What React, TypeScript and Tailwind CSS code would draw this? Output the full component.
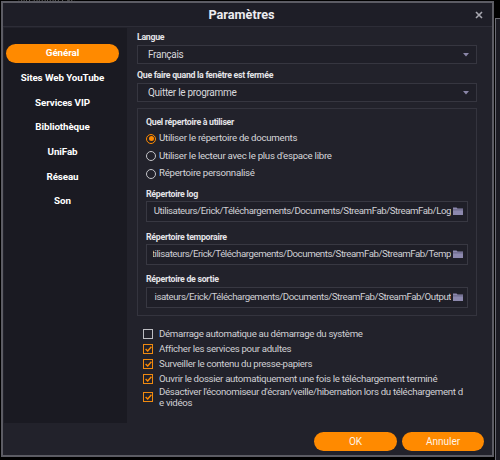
import React from "react";

const Folder = () => (
  <svg width="10" height="8" viewBox="0 0 10 8" className="shrink-0">
    <path d="M0 0.5 H3.5 L4.5 1.5 H10 V8 H0 Z" fill="#8c88ad" />
    <rect x="0" y="2.5" width="10" height="0.8" fill="#5e5a7c" />
  </svg>
);

const Arrow = () => (
  <svg width="6" height="4" viewBox="0 0 6 4">
    <path d="M0 0 H6 L3 3.5 Z" fill="#8a86a8" />
  </svg>
);

const Radio = ({ on, label }: { on?: boolean; label: string }) => (
  <div className="flex items-center h-[17.5px]">
    <div
      className={
        on
          ? "w-[10px] h-[10px] rounded-full border-[1.5px] border-[#ff8a00] flex items-center justify-center"
          : "w-[10px] h-[10px] rounded-full border-[1.5px] border-[#c4c4c8]"
      }
    >
      {on && <div className="w-[5px] h-[5px] rounded-full bg-[#ff8a00]" />}
    </div>
    <span className="ml-[3px] text-[9.7px] tracking-[-0.28px] text-[#d6d6da] whitespace-nowrap">{label}</span>
  </div>
);

const Check = ({ on }: { on?: boolean }) =>
  on ? (
    <div className="w-[10px] h-[10px] border-[1.5px] border-[#f08a10] flex items-center justify-center shrink-0">
      <svg width="7" height="6" viewBox="0 0 7 6">
        <path d="M0.6 3 L2.7 5 L6.4 0.8" stroke="#ff8a00" strokeWidth="1.4" fill="none" />
      </svg>
    </div>
  ) : (
    <div className="w-[10px] h-[10px] border-[1.5px] border-[#bdbdc2] shrink-0" />
  );

const Label = ({ children, cls }: { children: React.ReactNode; cls?: string }) => (
  <div className={"h-[12px] leading-[12px] text-[8.8px] font-bold tracking-[-0.3px] text-[#e4e4e8] whitespace-nowrap " + (cls || "")}>
    {children}
  </div>
);

const PathInput = ({ text, cls }: { text: string; cls: string }) => (
  <div className={"h-[21px] border border-[#383842] bg-[#1f1f28] flex items-center pl-[6px] pr-[4px] " + cls}>
    <div className="flex-1 overflow-hidden flex justify-end">
      <span className="text-[9.7px] tracking-[-0.45px] text-[#cfcfd4] whitespace-nowrap">{text}</span>
    </div>
    <div className="ml-[2px]">
      <Folder />
    </div>
  </div>
);

const Select = ({ text }: { text: string }) => (
  <div className="h-[19px] border border-[#363640] bg-[#1f1f28] flex items-center pl-[10px] pr-[7px]">
    <span className="flex-1 text-[10px] tracking-[-0.3px] text-[#d8d8dc]">{text}</span>
    <Arrow />
  </div>
);

const CheckRow = ({ on, children, cls }: { on?: boolean; children: React.ReactNode; cls?: string }) => (
  <div className={"flex items-center " + (cls || "h-[15px]")}>
    <Check on={on} />
    <div className="ml-[6px] text-[9.7px] tracking-[-0.33px] leading-[11px] text-[#d0d0d4] whitespace-nowrap">{children}</div>
  </div>
);

export default function App() {
  const nav = ["Général", "Sites Web YouTube", "Services VIP", "Bibliothèque", "UniFab", "Réseau", "Son"];
  return (
    <div className="relative w-[500px] h-[460px] bg-black overflow-hidden font-[Roboto,sans-serif]">
      <div className="absolute left-[495px] top-[18px] w-[20px] h-[460px] border-l border-t border-[#6a6a72] bg-[#1c1c24]" />
      <div className="absolute left-[18px] top-[-7px] text-[9px] text-[#6b6b6b] blur-[0.5px]">streamfab.exe</div>

      <div className="absolute left-[1px] top-[1px] w-[493px] h-[456px] border-2 border-[#5c5c64] bg-[#22222b] flex flex-col">
        <div className="h-[24px] shrink-0 flex items-center justify-center pr-[12px] border-b border-[#2d2d37] bg-[#1e1e27] relative">
          <span className="text-[12.7px] font-bold text-[#ececf0]">Paramètres</span>
          <svg className="absolute left-[472px] top-[8px]" width="8" height="8" viewBox="0 0 8 8">
            <path d="M1 1 L7 7 M7 1 L1 7" stroke="#a8a8b0" strokeWidth="1.6" />
          </svg>
        </div>

        <div className="h-[397px] shrink-0 flex">
          <div className="ml-[1px] mt-[1px] w-[123px] h-[395px] bg-[#1a1a22] pt-[16px] pl-[2px] pr-[8px] flex flex-col gap-[5.7px]">
            {nav.map((n, i) => (
              <div
                key={n}
                className={
                  "h-[19px] shrink-0 rounded-full flex items-center justify-center text-[9.8px] tracking-[-0.1px] font-bold text-white " +
                  (i === 0 ? "bg-[#ff8a00]" : "")
                }
              >
                {n}
              </div>
            ))}
          </div>

          <div className="ml-[10px] w-[340px] pt-[4px] flex flex-col">
            <Label cls="mb-[2px]">Langue</Label>
            <Select text="Français" />
            <Label cls="mt-[5px] mb-[2px]">Que faire quand la fenêtre est fermée</Label>
            <Select text="Quitter le programme" />

            <div className="mt-[6px] h-[208px] border border-[#34343e] pt-[7px] px-[8px] flex flex-col">
              <Label>Quel répertoire à utiliser</Label>
              <div className="mt-[2px]">
                <Radio on label="Utiliser le répertoire de documents" />
                <Radio label="Utiliser le lecteur avec le plus d'espace libre" />
                <Radio label="Répertoire personnalisé" />
              </div>
              <Label cls="mt-[5px]">Répertoire log</Label>
              <PathInput cls="mt-[1px] h-[20px]" text="Utilisateurs/Erick/Téléchargements/Documents/StreamFab/StreamFab/Log" />
              <Label cls="mt-[9px]">Répertoire temporaire</Label>
              <PathInput cls="mt-[1px]" text="tilisateurs/Erick/Téléchargements/Documents/StreamFab/StreamFab/Temp" />
              <Label cls="mt-[8px]">Répertoire de sortie</Label>
              <PathInput cls="mt-[2px]" text="isateurs/Erick/Téléchargements/Documents/StreamFab/StreamFab/Output" />
            </div>

            <div className="mt-[10px] pl-[6px] flex flex-col">
              <CheckRow>Démarrage automatique au démarrage du système</CheckRow>
              <CheckRow on>Afficher les services pour adultes</CheckRow>
              <CheckRow on>Surveiller le contenu du presse-papiers</CheckRow>
              <CheckRow on>Ouvrir le dossier automatiquement une fois le téléchargement terminé</CheckRow>
              <CheckRow on cls="h-[22px]">
                <div>Désactiver l'économiseur d'écran/veille/hibernation lors du téléchargement d</div>
                <div>e vidéos</div>
              </CheckRow>
            </div>
          </div>
        </div>

        <div className="flex-1 flex justify-end items-start pt-[8px] pr-[8px] gap-[5px]">
          <div className="w-[83px] h-[19px] rounded-full bg-[#ff8a00] flex items-center justify-center text-[10px] text-[#fff3e6]">OK</div>
          <div className="w-[82px] h-[19px] rounded-full bg-[#ff8a00] flex items-center justify-center text-[10px] text-[#fff3e6]">Annuler</div>
        </div>
      </div>
    </div>
  );
}
